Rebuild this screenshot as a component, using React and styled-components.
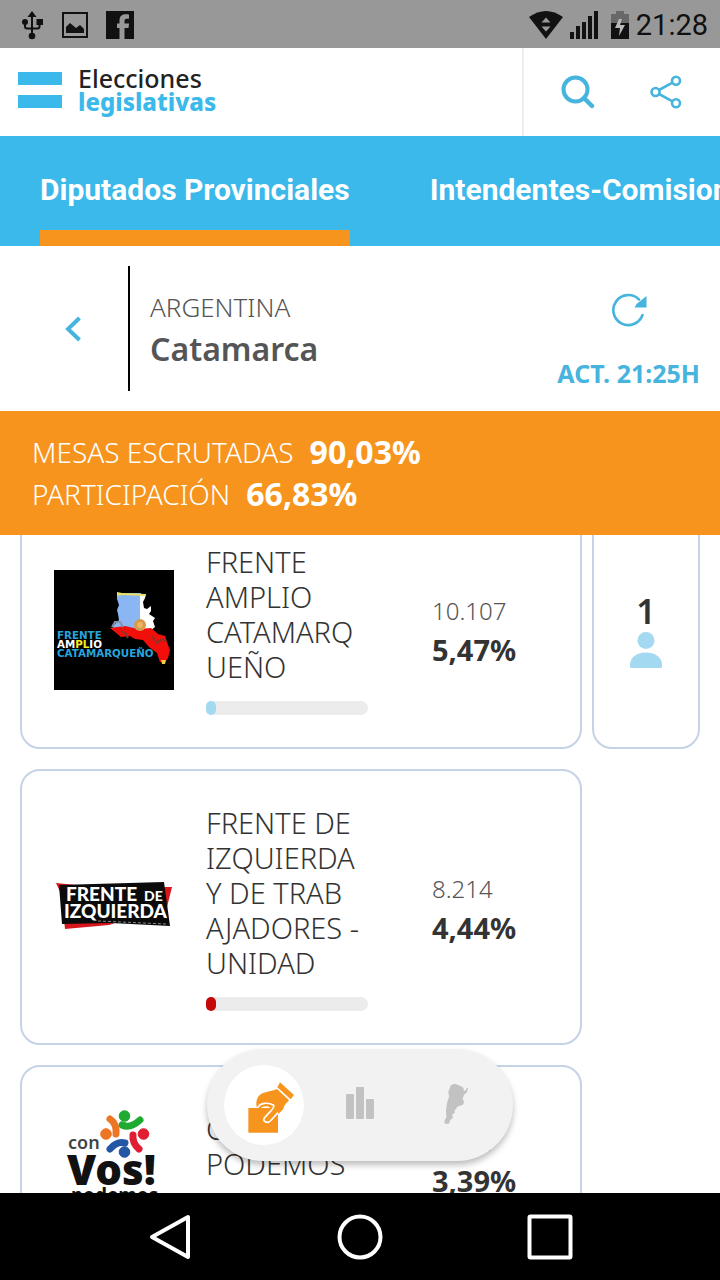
import React, { useLayoutEffect, useRef } from 'react'
import styled, { createGlobalStyle } from 'styled-components'

const colors = {
  sky: '#3ab9ea',
  icon: '#46b4dd',
  orange: '#f7941e',
  border: '#c6d2e6',
  text: '#333333',
  gray: '#555555',
}

const GlobalStyle = createGlobalStyle`
  * {
    box-sizing: border-box;
  }
  body {
    margin: 0;
    background: #ffffff;
    font-family: 'Noto Sans', 'Open Sans', sans-serif;
    color: ${colors.text};
  }
  h1, h2, p, ul, dl, dd {
    margin: 0;
    padding: 0;
  }
  svg {
    display: block;
  }
`

const Screen = styled.div`
  display: flex;
  flex-direction: column;
  height: 100vh;
  overflow: hidden;
`
const StatusBar = styled.div`
  display: flex;
  flex: none;
  justify-content: space-between;
  align-items: center;
  height: 48px;
  padding: 1px 12px 0 20px;
  background: #989898;
  color: #111111;
`
const StatusGroup = styled.div`
  display: flex;
  align-items: center;
  gap: ${props => props.$gap}px;
`
const Clock = styled.span`
  font-family: Roboto, sans-serif;
  font-size: 29px;
`
const Header = styled.header`
  display: flex;
  flex: none;
  height: 88px;
  background: #ffffff;
`
const Brand = styled.div`
  display: flex;
  flex: 1;
  align-items: center;
  gap: 16px;
  padding: 0 18px 4px;
`
const Flag = styled.div`
  display: flex;
  flex-direction: column;
  gap: 10px;
`
const FlagStripe = styled.div`
  width: 44px;
  height: 13px;
  background: ${colors.sky};
`
const BrandName = styled.h1`
  display: flex;
  flex-direction: column;
  font-size: 25px;
  line-height: 24px;
  font-weight: 500;
  color: #222222;
`
const BrandAccent = styled.span`
  font-size: 24px;
  font-weight: 800;
  color: ${colors.sky};
`
const IconButton = styled.button`
  display: flex;
  justify-content: center;
  align-items: center;
  padding: 0;
  border: none;
  background: none;
  color: ${colors.icon};
`
const HeaderActions = styled.div`
  display: flex;
  width: 198px;
  padding: 0 10px;
  border-left: 2px solid #eeeeee;

  ${IconButton} {
    flex: 1;
  }
`
const Tabs = styled.nav`
  display: flex;
  flex: none;
  gap: 80px;
  height: 110px;
  padding: 0 40px;
  overflow: hidden;
  background: ${colors.sky};
`
const Tab = styled.a`
  display: flex;
  flex: none;
  align-items: center;
  border-top: 16px solid transparent;
  border-bottom: 16px solid ${props => (props.$active ? colors.orange : 'transparent')};
  padding-bottom: 4px;
  font-family: Roboto, sans-serif;
  font-size: 30px;
  font-weight: 700;
  color: #ffffff;
  text-decoration: none;
  white-space: nowrap;
`
const Place = styled.section`
  display: flex;
  flex: none;
  height: 165px;
  padding: 20px 20px 20px 0;
`
const BackButton = styled(IconButton)`
  width: 128px;
  padding-left: 18px;
`
const PlaceNames = styled.div`
  display: flex;
  flex: 1;
  flex-direction: column;
  justify-content: center;
  padding-left: 20px;
  padding-bottom: 2px;
  border-left: 2px solid #000000;
`
const Country = styled.p`
  font-size: 26px;
  line-height: 42px;
  font-weight: 300;
  color: ${colors.gray};
`
const Province = styled.h2`
  font-size: 32px;
  line-height: 42px;
  font-weight: 600;
  color: ${colors.gray};
`
const Update = styled.div`
  display: flex;
  flex-direction: column;
  justify-content: space-between;
  align-items: center;
  padding: 27px 0 2px;
  font-size: 25px;
  line-height: 32px;
  font-weight: 700;
  color: ${colors.icon};
`
const Totals = styled.dl`
  flex: none;
  padding: 20px 32px;
  background: ${colors.orange};
  color: #ffffff;
`
const Total = styled.div`
  display: flex;
  gap: 16px;
  line-height: 42px;
`
const TotalLabel = styled.dt`
  font-size: 28px;
  font-weight: 350;
`
const TotalValue = styled.dd`
  font-size: 32px;
  font-weight: 700;
`
const Results = styled.main`
  position: relative;
  display: flex;
  flex: 1;
  flex-direction: column;
  min-height: 0;
`
const List = styled.ul`
  display: flex;
  flex: 1;
  flex-direction: column;
  gap: 20px;
  min-height: 0;
  padding: 0 20px;
  overflow-y: auto;
  scrollbar-width: none;
  list-style: none;
`
const Row = styled.li`
  display: grid;
  flex: none;
  grid-template-columns: 1fr 108px;
  gap: 10px;
`
const Card = styled.article`
  display: flex;
  align-items: center;
  gap: 32px;
  padding: 34px 32px 32px;
  border: 2px solid ${colors.border};
  border-radius: 20px;
`
const Party = styled.div`
  flex: 1;
  min-width: 0;
`
const PartyName = styled.h2`
  margin-bottom: 17px;
  font-size: 29px;
  line-height: 35px;
  font-weight: 350;
`
const NameLine = styled.span`
  display: block;
  white-space: nowrap;
`
const Track = styled.div`
  height: 14px;
  border-radius: 7px;
  background: #ececec;
`
const Fill = styled.div`
  min-width: 10px;
  height: 14px;
  border-radius: 5px;
  background: ${props => props.$color};
`
const Figures = styled.div`
  width: 148px;
  padding-left: 32px;
  line-height: 39px;
`
const Votes = styled.p`
  font-size: 24px;
  font-weight: 350;
  color: ${colors.gray};
`
const Percent = styled.p`
  font-size: 29px;
  font-weight: 700;
`
const Seats = styled.aside`
  display: flex;
  flex-direction: column;
  justify-content: center;
  align-items: center;
  border: 2px solid ${colors.border};
  border-radius: 20px;
  font-size: 34px;
  line-height: 42px;
  font-weight: 600;
`
const ViewSwitch = styled.nav`
  position: absolute;
  bottom: 32px;
  left: 50%;
  display: flex;
  align-items: center;
  gap: 16px;
  padding: 16px 17px;
  border-radius: 56px;
  background: #f2f2f2;
  box-shadow: 0 4px 6px rgba(0, 0, 0, 0.26);
  transform: translateX(-50%);
`
const ViewButton = styled(IconButton)`
  width: 80px;
  height: 80px;
  border-radius: 50%;
  background: ${props => (props.$active ? '#ffffff' : 'transparent')};
  color: ${props => (props.$active ? colors.orange : '#c2c2c2')};
`
const SystemBar = styled.footer`
  display: grid;
  flex: none;
  grid-template-columns: repeat(3, 1fr);
  height: 87px;
  padding: 0 75px;
  background: #000000;
`
const SystemButton = styled(IconButton)`
  color: #ffffff;
`

const UsbIcon = () => (
  <svg width="24" height="30" viewBox="0 0 24 30" fill="currentColor">
    <path d="M12 1l4.5 6h-9z" />
    <circle cx="5" cy="12" r="3" />
    <rect x="16.5" y="9" width="6.500" height="6" />
    <circle cx="12" cy="26" r="3.300" />
    <path d="M12 5v20M5 12v4.500q0 2 2 2h10.500q2 0 2-2V13" fill="none" stroke="currentColor" strokeWidth="2" />
  </svg>
)

const PictureIcon = () => (
  <svg width="26" height="26" viewBox="0 0 26 26">
    <rect x="1" y="1" width="24" height="24" fill="none" stroke="currentColor" strokeWidth="2" />
    <path d="M4 21v-6l4-4 6 5 4-3 4 4v4z" fill="currentColor" />
  </svg>
)

const FacebookIcon = () => (
  <svg width="28" height="28" viewBox="0 0 28 28">
    <path
      d="M0 0h28v28H18.500V17h4l.6-4.500h-4.600v-2.300c0-1.700.6-2.400 2.400-2.400H23V3.500c-6-.8-9.500.8-9.500 6v3H11V17h2.500v11H0z"
      fill="currentColor"
    />
  </svg>
)

const WifiIcon = () => (
  <svg width="34" height="28" viewBox="0 0 34 28">
    <path d="M0 6Q17-6 34 6L17 28z" fill="currentColor" />
    <path d="M12.500 11.500l4.500-5 4.500 5zM12.500 15.500l4.500 5 4.500-5z" fill="#989898" />
  </svg>
)

const SignalIcon = () => (
  <svg width="28" height="28" viewBox="0 0 28 28" fill="currentColor">
    <path d="M0 21h4v7H0zM6 15h4v13H6zM12 11h4v17h-4zM18 5h4v23h-4zM24 0h4v28h-4z" />
  </svg>
)

const BatteryIcon = () => (
  <svg width="24" height="28" viewBox="-6 0 24 28">
    <path d="M5 0h8v3h5v9H0V3h5z" fill="#686868" />
    <path d="M0 12h18v16H0z" fill="currentColor" />
    <path d="M8 8l-4 9h5l-1 8 6-11H9l2-6z" fill="#b9b9b9" />
  </svg>
)

const SearchIcon = () => (
  <svg width="34" height="34" viewBox="0 0 34 34" fill="none" stroke="currentColor" strokeWidth="4">
    <circle cx="14.500" cy="14.500" r="12" />
    <path d="M23 23l8 8" strokeWidth="4.500" strokeLinecap="round" />
  </svg>
)

const ShareIcon = () => (
  <svg width="32" height="34" viewBox="0 0 32 34" fill="none" stroke="currentColor" strokeWidth="2.600">
    <circle cx="5.500" cy="17" r="4" />
    <circle cx="26" cy="5.800" r="4" />
    <circle cx="26" cy="28.200" r="4" />
    <path d="M9 15l13.500-7.300M9 19l13.500 7.300" />
  </svg>
)

const BackIcon = () => (
  <svg width="18" height="26" viewBox="0 0 18 26" fill="none" stroke="currentColor" strokeWidth="4">
    <path d="M15.500 2L4 13l11.500 11" />
  </svg>
)

const RefreshIcon = () => (
  <svg width="36" height="34" viewBox="0 0 36 34">
    <path d="M31.500 22A15 15 0 1 1 28 6.500" fill="none" stroke="currentColor" strokeWidth="2.600" strokeLinecap="round" />
    <path d="M35.500 3v11.500H23.500l2-3.500z" fill="currentColor" />
  </svg>
)

const PersonIcon = ({ color }) => (
  <svg width="34" height="36" viewBox="0 0 34 36" fill={color}>
    <circle cx="17" cy="8.500" r="8.500" />
    <path d="M1 35C0 26 7 20.500 17 20.500S34 26 33 35q-.3 1-1.500 1h-29Q1.300 36 1 35z" />
  </svg>
)

const VoteIcon = () => (
  <svg width="60" height="60" viewBox="132 135 180 180">
    <path d="M177 234h87v74H177q-2 0-2-2v-70q0-2 2-2z" fill="currentColor" />
    <path
      d="M200 231c-4-22 4-38 22-43 14-5 26-4 39-11L297 211c-6 8-12 10-15 20-2 8-10 14-18 22L243 275c-8 9-24 3-22-8 2-10 18-20 20-33-8-8-22-6-30 2z"
      fill="currentColor"
    />
    <path
      d="M203 233c8-14 30-18 48-7 4 9-13 19-28 38-6 9 8 18 18 9L264 248"
      fill="none"
      stroke="#ffffff"
      strokeWidth="5"
    />
    <path d="M270 157L312 195l-10 13L262 172z" fill="currentColor" />
  </svg>
)

const ChartIcon = () => (
  <svg width="28" height="36" viewBox="0 0 28 36" fill="currentColor">
    <rect x="0" y="7" width="8" height="25" rx="1" />
    <rect x="10" y="0" width="8" height="32" rx="1" />
    <rect x="20" y="12" width="8" height="20" rx="1" />
  </svg>
)

const MapIcon = () => (
  <svg width="40" height="44" viewBox="738 159 120 132" fill="currentColor">
    <path d="M783 165L795 161 810 167 821 174 821 183 828 181 830 174 834 175 831 187 822 194 818 206 822 216 819 224 800 231 799 238 793 240 795 248 786 254 789 263 780 271 778 280 768 283 762 276 769 262 768 240 772 215 777 200 775 185z" />
  </svg>
)

const AmplioLogo = () => (
  <svg width="120" height="120" viewBox="0 0 120 120" role="img" aria-label="Frente Amplio Catamarqueño">
    <rect width="120" height="120" fill="#000000" />
    <path d="M63 23h24v37H58l2-5 5-5-1-6-1-4 2-5-2-6z" fill="#8ab6f4" />
    <path d="M86 24h6l-1 4-2 4 1 6 3 1 4-3 0 5-2 3 6 4-2 3 2 6-5 4H86z" fill="#ffffff" />
    <path d="M63 22l5 1 24 1v2l-24-1-5 1z" fill="#e8df63" />
    <path d="M56 58l15-2 13 3 13-1 7 6 7 2 3 9 2 5-2 8-3 4h-5l-3-9-8-6-6-7-8-1-5-3-9 1-6-5z" fill="#f20f0b" />
    <path d="M67 61l5 3 2 4M98 66l5 7 5-4 4 3" fill="none" stroke="#8c3423" strokeWidth="2" />
    <path d="M58 57l3-5 5 0 3 5" fill="none" stroke="#8592a8" strokeWidth="2" />
    <circle cx="86" cy="55" r="6" fill="#d49b4e" />
    <circle cx="86" cy="55" r="3" fill="#efb45b" />
    <path d="M107 90h5l-1 4h-3z" fill="#f2cf3a" />
    <g fontFamily="'DejaVu Sans', sans-serif" fontWeight="700" fontSize="10.300">
      <text x="3" y="69" fill="#27a5dd">FRENTE</text>
      <text x="3" y="78" fill="#ffffff">AM<tspan fill="#f5ee22">PL</tspan>IO</text>
      <text x="3" y="87" fill="#27a5dd">CATAMARQUEÑO</text>
    </g>
  </svg>
)

const IzquierdaLogo = () => (
  <svg width="120" height="120" viewBox="0 0 120 120" role="img" aria-label="Frente de Izquierda">
    <path d="M2 35l20 2-8 24zM104 39l14 0-7 28zM10 72h60l-15 5-44 4z" fill="#d8161b" />
    <path d="M5 37l105-3 6 44-59-3-49 1z" fill="#0b0b0b" />
    <g fontFamily="Lato, sans-serif" fontWeight="900" fill="#ffffff">
      <text x="12" y="53" fontSize="19">FRENTE</text>
      <text x="90" y="53" fontSize="14">DE</text>
      <text x="10" y="70" fontSize="19">IZQUIERDA</text>
    </g>
    <path d="M44 73l68 3" stroke="#8a8a8a" strokeDasharray="3 2" />
  </svg>
)

const VosLogo = () => (
  <svg width="120" height="120" viewBox="0 0 120 120" role="img" aria-label="Con Vos Podemos">
    <g fill="#1faa32" stroke="#1faa32">
      <circle cx="70.500" cy="15" r="5.300" />
      <path d="M68 24q8 4 18-5" fill="none" strokeWidth="7" strokeLinecap="round" />
    </g>
    <g fill="#ec7623" stroke="#ec7623">
      <circle cx="52" cy="33" r="5.300" />
      <path d="M56 18q7 5 6 15" fill="none" strokeWidth="7" strokeLinecap="round" />
    </g>
    <g fill="#e11d32" stroke="#e11d32">
      <circle cx="89.500" cy="33" r="5.300" />
      <path d="M79 34q-1 8 6 14" fill="none" strokeWidth="7" strokeLinecap="round" />
    </g>
    <g fill="#2356a4" stroke="#2356a4">
      <circle cx="70.500" cy="51" r="5.300" />
      <path d="M56 48q7-8 15-6" fill="none" strokeWidth="7" strokeLinecap="round" />
    </g>
    <g fontFamily="'Noto Sans', sans-serif" fill="#111111">
      <text x="14" y="48" fontSize="18" fontWeight="600" fill="#444444">con</text>
      <text x="13" y="84" fontSize="42" fontWeight="900">Vos!</text>
      <text x="17" y="101" fontSize="19" fontWeight="700">podemos</text>
    </g>
  </svg>
)

const parties = [
  {
    id: 'amplio',
    logo: AmplioLogo,
    name: ['FRENTE', 'AMPLIO', 'CATAMARQ', 'UEÑO'],
    votes: '10.107',
    percent: '5,47%',
    share: 5.47,
    color: '#a3daf2',
    seats: 1,
  },
  {
    id: 'izquierda',
    logo: IzquierdaLogo,
    name: ['FRENTE DE', 'IZQUIERDA', 'Y DE TRAB', 'AJADORES -', 'UNIDAD'],
    votes: '8.214',
    percent: '4,44%',
    share: 4.44,
    color: '#c50808',
  },
  {
    id: 'vos',
    logo: VosLogo,
    name: ['CON VOS', 'PODEMOS'],
    votes: '6.264',
    percent: '3,39%',
    share: 3.39,
    color: '#f28c28',
  },
]

const PartyRow = ({ party }) => {
  const Logo = party.logo
  return (
    <Row>
      <Card>
        <Logo />
        <Party>
          <PartyName>
            {party.name.map(line => (
              <NameLine key={line}>{line}</NameLine>
            ))}
          </PartyName>
          <Track>
            <Fill $color={party.color} style={{ width: `${party.share}%` }} />
          </Track>
        </Party>
        <Figures>
          <Votes>{party.votes}</Votes>
          <Percent>{party.percent}</Percent>
        </Figures>
      </Card>
      {party.seats && (
        <Seats>
          {party.seats}
          <PersonIcon color={party.color} />
        </Seats>
      )}
    </Row>
  )
}

const App = () => {
  const list = useRef(null)

  // the list opens slightly scrolled, under the totals
  useLayoutEffect(() => {
    list.current.scrollTop = 27
  }, [])

  return (
    <Screen>
      <GlobalStyle />
      <StatusBar>
        <StatusGroup $gap={18}>
          <UsbIcon />
          <PictureIcon />
          <FacebookIcon />
        </StatusGroup>
        <StatusGroup $gap={7}>
          <WifiIcon />
          <SignalIcon />
          <BatteryIcon />
          <Clock>21:28</Clock>
        </StatusGroup>
      </StatusBar>

      <Header>
        <Brand>
          <Flag>
            <FlagStripe />
            <FlagStripe />
          </Flag>
          <BrandName>
            Elecciones
            <BrandAccent>legislativas</BrandAccent>
          </BrandName>
        </Brand>
        <HeaderActions>
          <IconButton aria-label="Buscar"><SearchIcon /></IconButton>
          <IconButton aria-label="Compartir"><ShareIcon /></IconButton>
        </HeaderActions>
      </Header>

      <Tabs>
        <Tab href="#diputados" $active>Diputados Provinciales</Tab>
        <Tab href="#intendentes">Intendentes-Comisionados</Tab>
      </Tabs>

      <Place>
        <BackButton aria-label="Volver"><BackIcon /></BackButton>
        <PlaceNames>
          <Country>ARGENTINA</Country>
          <Province>Catamarca</Province>
        </PlaceNames>
        <Update>
          <IconButton aria-label="Actualizar"><RefreshIcon /></IconButton>
          <span>ACT. 21:25H</span>
        </Update>
      </Place>

      <Totals>
        <Total>
          <TotalLabel>MESAS ESCRUTADAS</TotalLabel>
          <TotalValue>90,03%</TotalValue>
        </Total>
        <Total>
          <TotalLabel>PARTICIPACIÓN</TotalLabel>
          <TotalValue>66,83%</TotalValue>
        </Total>
      </Totals>

      <Results>
        <List ref={list}>
          {parties.map(party => (
            <PartyRow key={party.id} party={party} />
          ))}
        </List>
        <ViewSwitch>
          <ViewButton $active aria-label="Resultados"><VoteIcon /></ViewButton>
          <ViewButton aria-label="Gráficos"><ChartIcon /></ViewButton>
          <ViewButton aria-label="Mapa"><MapIcon /></ViewButton>
        </ViewSwitch>
      </Results>

      <SystemBar>
        <SystemButton aria-label="Atrás">
          <svg width="42" height="46" viewBox="0 0 42 46" fill="none" stroke="currentColor" strokeWidth="4" strokeLinejoin="round">
            <path d="M39 3v40L3 23z" />
          </svg>
        </SystemButton>
        <SystemButton aria-label="Inicio">
          <svg width="46" height="46" viewBox="0 0 46 46" fill="none" stroke="currentColor" strokeWidth="4">
            <circle cx="23" cy="23" r="20.500" />
          </svg>
        </SystemButton>
        <SystemButton aria-label="Recientes">
          <svg width="46" height="46" viewBox="0 0 46 46" fill="none" stroke="currentColor" strokeWidth="4">
            <rect x="2.500" y="2.500" width="41" height="41" rx="1" />
          </svg>
        </SystemButton>
      </SystemBar>
    </Screen>
  )
}

export default App
